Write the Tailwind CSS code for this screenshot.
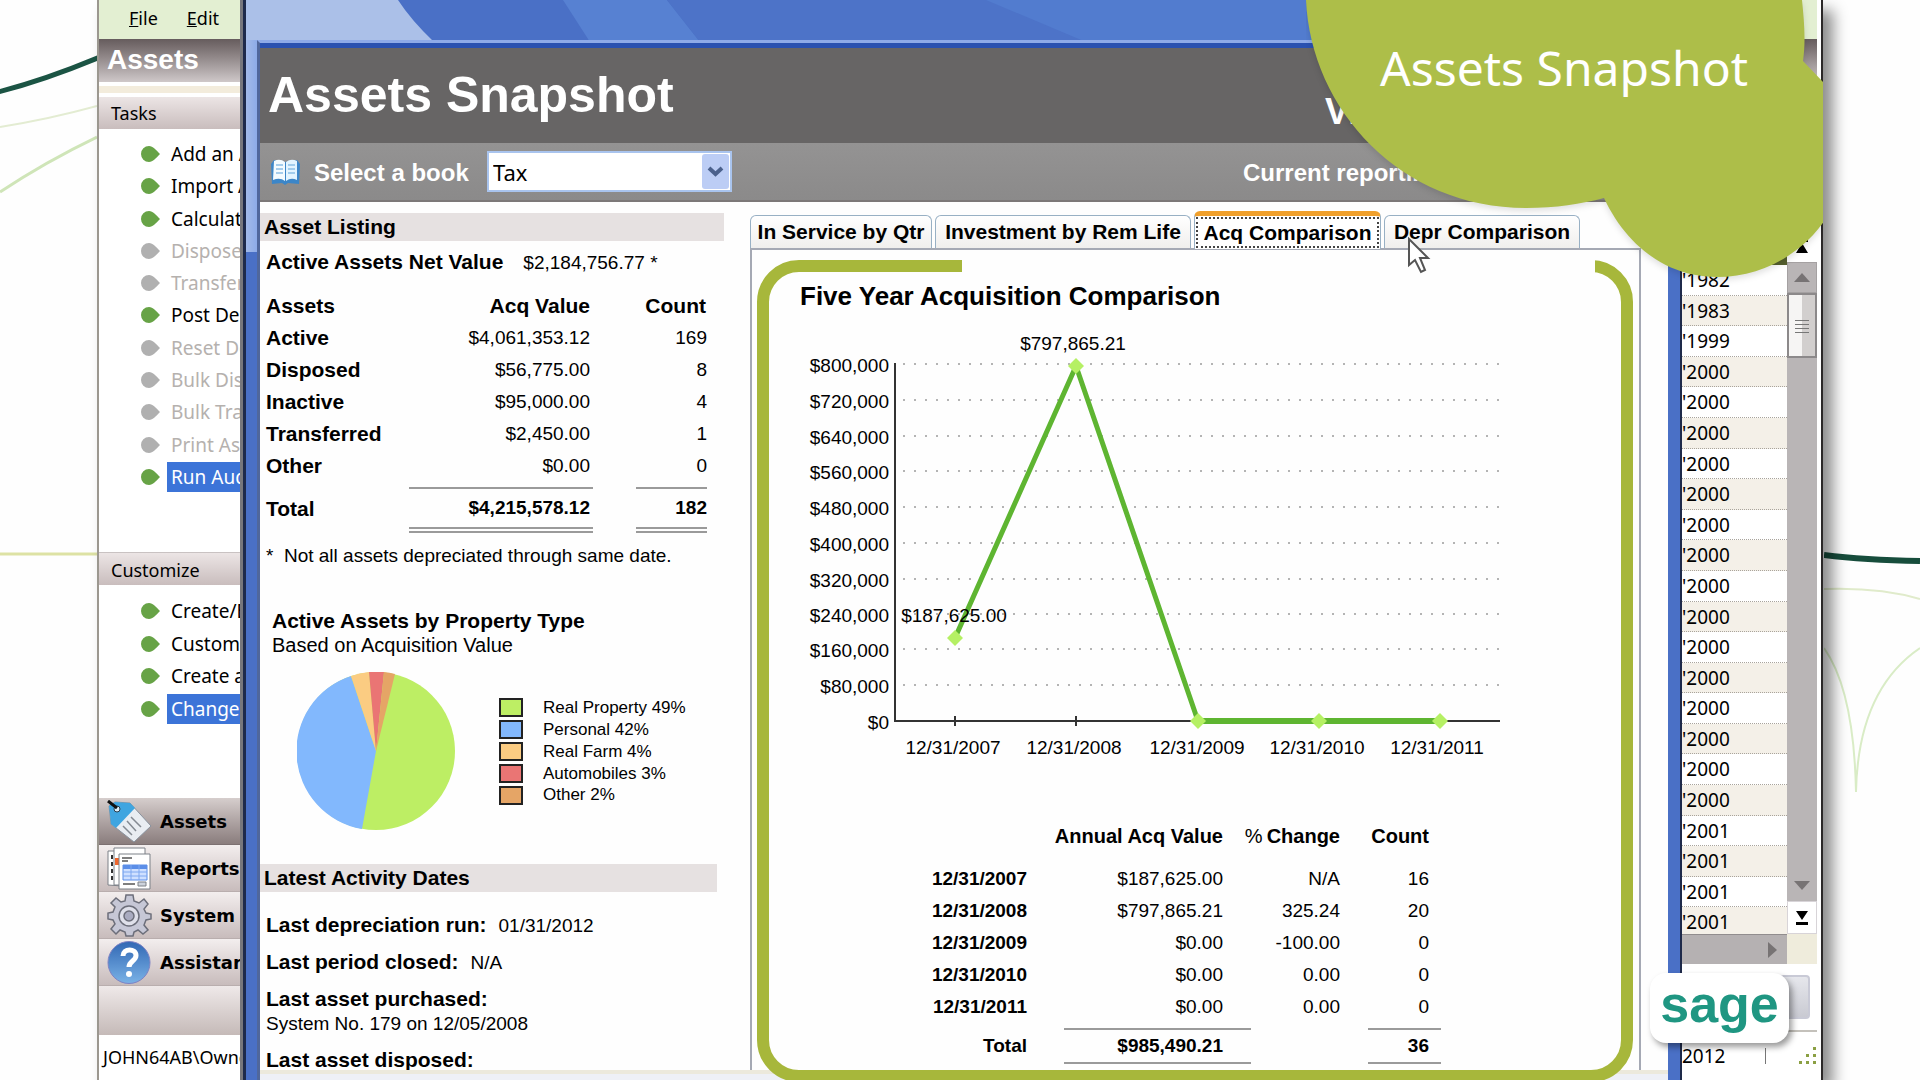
<!DOCTYPE html>
<html lang="en">
<head>
    <meta charset="UTF-8">
    <meta name="viewport" content="width=device-width, initial-scale=1.0">
    <title>Assets Snapshot</title>
    <script src="https://cdn.jsdelivr.net/npm/@tailwindcss/browser@4"></script>
</head>
<body class="relative h-screen overflow-hidden bg-[#fefefe] px-[97px] font-['Liberation_Sans',Arial,sans-serif] text-black">

    <!-- Background swooshes -->
    <svg class="absolute left-0 top-0" width="97" height="600" viewBox="0 0 97 600" fill="none">
        <path d="M-2 92 Q45 80 100 57" stroke="#1b5444" stroke-width="5"/>
        <path d="M0 127 Q50 119 97 106" stroke="#e3ecd2" stroke-width="2"/>
        <path d="M0 192 Q45 162 97 137" stroke="#cfe5b8" stroke-width="3"/>
        <path d="M0 554H97" stroke="#dde2a4" stroke-width="3"/>
    </svg>
    <svg class="absolute right-0 top-0" width="96" height="810" viewBox="0 0 96 810" fill="none">
        <path d="M0 555 Q40 560 96 561" stroke="#174d3c" stroke-width="6"/>
        <path d="M0 589 Q55 587 96 599" stroke="#e0ebcb" stroke-width="2"/>
        <path d="M0 648 Q30 690 32 792 Q34 690 96 648" stroke="#d9ecc6" stroke-width="2"/>
    </svg>

    <div class="relative flex h-full shadow-[10px_10px_14px_rgba(0,0,0,0.45)]">

        <!-- Task sidebar -->
        <aside class="flex w-[146px] shrink-0 flex-col overflow-hidden whitespace-nowrap border-r-3 border-l-2 border-r-[#77777c] border-l-[#9b978f] bg-white font-['Noto_Sans',sans-serif] text-[18px]">
            <nav class="flex h-[39px] shrink-0 items-center gap-[29px] bg-[#e3efd2] pb-[3px] pl-[30px]">
                <a href="#"><u>F</u>ile</a>
                <a href="#"><u>E</u>dit</a>
            </nav>
            <h2 class="h-[43px] shrink-0 bg-linear-to-b from-[#665c5d] to-[#cfc8c9] pl-2 font-['Liberation_Sans',sans-serif] text-[28px] leading-[42px] font-bold text-white">Assets</h2>
            <div class="h-[15px] shrink-0 border-y-4 border-white bg-[#f3ecdc]"></div>
            <h3 class="h-[32px] shrink-0 bg-linear-to-b from-[#ece5e5] to-[#c9bdbd] pl-3 leading-[32px]">Tasks</h3>
            <ul class="mt-[9px] grid h-[355px] shrink-0 auto-rows-fr items-center pl-[42px] text-[19px]">
                <li class="flex items-center gap-[7px]"><svg class="shrink-0 fill-[#67a346]" width="19" height="16" viewBox="0 0 19 16"><path d="M8 0C12 0 15 4 19 8C15 12 12 16 8 16A8 8 0 0 1 8 0Z"/></svg><a href="#" class="px-1 leading-[30px]">Add an Asset</a></li>
                <li class="flex items-center gap-[7px]"><svg class="shrink-0 fill-[#67a346]" width="19" height="16" viewBox="0 0 19 16"><path d="M8 0C12 0 15 4 19 8C15 12 12 16 8 16A8 8 0 0 1 8 0Z"/></svg><a href="#" class="px-1 leading-[30px]">Import Assets</a></li>
                <li class="flex items-center gap-[7px]"><svg class="shrink-0 fill-[#67a346]" width="19" height="16" viewBox="0 0 19 16"><path d="M8 0C12 0 15 4 19 8C15 12 12 16 8 16A8 8 0 0 1 8 0Z"/></svg><a href="#" class="px-1 leading-[30px]">Calculate</a></li>
                <li class="flex items-center gap-[7px] text-[#b5b1ae]"><svg class="shrink-0 fill-[#b0b0b0]" width="19" height="16" viewBox="0 0 19 16"><path d="M8 0C12 0 15 4 19 8C15 12 12 16 8 16A8 8 0 0 1 8 0Z"/></svg><a href="#" class="px-1 leading-[30px]">Dispose</a></li>
                <li class="flex items-center gap-[7px] text-[#b5b1ae]"><svg class="shrink-0 fill-[#b0b0b0]" width="19" height="16" viewBox="0 0 19 16"><path d="M8 0C12 0 15 4 19 8C15 12 12 16 8 16A8 8 0 0 1 8 0Z"/></svg><a href="#" class="px-1 leading-[30px]">Transfer</a></li>
                <li class="flex items-center gap-[7px]"><svg class="shrink-0 fill-[#67a346]" width="19" height="16" viewBox="0 0 19 16"><path d="M8 0C12 0 15 4 19 8C15 12 12 16 8 16A8 8 0 0 1 8 0Z"/></svg><a href="#" class="px-1 leading-[30px]">Post Depreciation</a></li>
                <li class="flex items-center gap-[7px] text-[#b5b1ae]"><svg class="shrink-0 fill-[#b0b0b0]" width="19" height="16" viewBox="0 0 19 16"><path d="M8 0C12 0 15 4 19 8C15 12 12 16 8 16A8 8 0 0 1 8 0Z"/></svg><a href="#" class="px-1 leading-[30px]">Reset Depreciation</a></li>
                <li class="flex items-center gap-[7px] text-[#b5b1ae]"><svg class="shrink-0 fill-[#b0b0b0]" width="19" height="16" viewBox="0 0 19 16"><path d="M8 0C12 0 15 4 19 8C15 12 12 16 8 16A8 8 0 0 1 8 0Z"/></svg><a href="#" class="px-1 leading-[30px]">Bulk Disposal</a></li>
                <li class="flex items-center gap-[7px] text-[#b5b1ae]"><svg class="shrink-0 fill-[#b0b0b0]" width="19" height="16" viewBox="0 0 19 16"><path d="M8 0C12 0 15 4 19 8C15 12 12 16 8 16A8 8 0 0 1 8 0Z"/></svg><a href="#" class="px-1 leading-[30px]">Bulk Transfer</a></li>
                <li class="flex items-center gap-[7px] text-[#b5b1ae]"><svg class="shrink-0 fill-[#b0b0b0]" width="19" height="16" viewBox="0 0 19 16"><path d="M8 0C12 0 15 4 19 8C15 12 12 16 8 16A8 8 0 0 1 8 0Z"/></svg><a href="#" class="px-1 leading-[30px]">Print Assets</a></li>
                <li class="flex items-center gap-[7px]"><svg class="shrink-0 fill-[#67a346]" width="19" height="16" viewBox="0 0 19 16"><path d="M8 0C12 0 15 4 19 8C15 12 12 16 8 16A8 8 0 0 1 8 0Z"/></svg><a href="#" class="bg-[#3c74d8] px-1 leading-[30px] text-white">Run Audit</a></li>
            </ul>
            <h3 class="mt-[59px] h-[33px] shrink-0 border-t border-[#c9c2c2] bg-linear-to-b from-[#ece5e5] to-[#c9bdbd] pl-3 leading-[34px]">Customize</h3>
            <ul class="mt-[10px] grid h-[130px] shrink-0 auto-rows-fr items-center pl-[42px] text-[19px]">
                <li class="flex items-center gap-[7px]"><svg class="shrink-0 fill-[#67a346]" width="19" height="16" viewBox="0 0 19 16"><path d="M8 0C12 0 15 4 19 8C15 12 12 16 8 16A8 8 0 0 1 8 0Z"/></svg><a href="#" class="px-1 leading-[30px]">Create/Edit Group</a></li>
                <li class="flex items-center gap-[7px]"><svg class="shrink-0 fill-[#67a346]" width="19" height="16" viewBox="0 0 19 16"><path d="M8 0C12 0 15 4 19 8C15 12 12 16 8 16A8 8 0 0 1 8 0Z"/></svg><a href="#" class="px-1 leading-[30px]">Customize View</a></li>
                <li class="flex items-center gap-[7px]"><svg class="shrink-0 fill-[#67a346]" width="19" height="16" viewBox="0 0 19 16"><path d="M8 0C12 0 15 4 19 8C15 12 12 16 8 16A8 8 0 0 1 8 0Z"/></svg><a href="#" class="px-1 leading-[30px]">Create a Report</a></li>
                <li class="flex items-center gap-[7px]"><svg class="shrink-0 fill-[#67a346]" width="19" height="16" viewBox="0 0 19 16"><path d="M8 0C12 0 15 4 19 8C15 12 12 16 8 16A8 8 0 0 1 8 0Z"/></svg><a href="#" class="bg-[#3c74d8] px-1 leading-[30px] text-white">Change View</a></li>
            </ul>
            <div class="mt-auto grid shrink-0 auto-rows-[47px] font-['DejaVu_Sans',Verdana,sans-serif] font-bold">
                <button class="flex items-center gap-2 border-b border-[#7c7071] bg-linear-to-b from-[#d6cecd] to-[#8a7d7d] pl-2">
                    <svg class="shrink-0" width="45" height="43" viewBox="0 0 45 43">
                        <path d="M2 6L4 24L27 42L44 26L23 3L8 2Z" fill="#e9edf2" stroke="#8a939e"/>
                        <path d="M2 6L4 24L9 28L28 8L23 3L8 2Z" fill="#3fa5e0"/>
                        <path d="M16 26L25 35M20 21L29 31M24 17L34 27" stroke="#848a92" stroke-width="1.5"/>
                        <circle cx="10" cy="9" r="3" fill="#dff0fa" stroke="#2b3e4c"/>
                        <path d="M1 1L10 8" stroke="#111" stroke-width="3"/>
                    </svg>
                    <span>Assets</span>
                </button>
                <button class="flex items-center gap-2 border-b border-[#b9aeae] bg-linear-to-b from-[#f3eeee] to-[#c8bcbc] pl-2">
                    <svg class="shrink-0" width="45" height="43" viewBox="0 0 45 43" fill="#fff" stroke="#7d8188">
                        <path d="M1 4H30V40L1 38Z"/>
                        <path d="M7 1H38V38H7Z"/>
                        <path d="M5 8V36" stroke="#333" stroke-dasharray="4 3" stroke-width="2"/>
                        <path d="M10 11V18" stroke="#f0672e" stroke-width="4"/>
                        <path d="M12 7H43V42H12Z"/>
                        <path d="M15 11H25M15 14H21M16 37H28" stroke="#555" stroke-width="1.5"/>
                        <path d="M16 18H40V33H16Z" fill="#cfe0ff" stroke="#5b8ee8"/>
                        <path d="M16 20H40" stroke="#5b8ee8" stroke-width="4"/>
                        <path d="M16 25H40M16 29H40M24 18V33M32 18V33" stroke="#7ea8f0"/>
                        <path d="M31 35H39V39H31Z" fill="#cdd3dc"/>
                    </svg>
                    <span>Reports</span>
                </button>
                <button class="flex items-center gap-2 border-b border-[#b9aeae] bg-linear-to-b from-[#f3eeee] to-[#c8bcbc] pl-2">
                    <svg class="shrink-0" width="45" height="43" viewBox="0 0 45 43" fill="#c6c7d6" stroke="#6c6e7a" stroke-width="1.5">
                        <path d="M19 1H26L27 7L32 9L37 5L41 10L37 15L39 19L44 20V25L39 26L37 31L41 36L36 40L31 36L27 38L26 42H19L18 38L13 36L9 40L4 35L8 30L6 26L1 25V19L6 18L8 13L4 9L9 4L14 8L18 7Z"/>
                        <circle cx="22" cy="22" r="10" fill="#dfe0ea"/>
                        <circle cx="22" cy="22" r="5" fill="#a9abc0"/>
                    </svg>
                    <span>System</span>
                </button>
                <button class="flex items-center gap-2 border-b border-[#b9aeae] bg-linear-to-b from-[#f3eeee] to-[#c8bcbc] pl-2">
                    <svg class="shrink-0" width="45" height="43" viewBox="0 0 45 43">
                        <defs><linearGradient id="help" x2="0" y2="1"><stop stop-color="#3167b4"/><stop offset="1" stop-color="#7ab2e6"/></linearGradient></defs>
                        <circle cx="22" cy="21.5" r="21" fill="url(#help)" stroke="#7d82c4"/>
                        <path d="M16 15C16 7 29 7 29 14.500C29 20 22 20 22 26" fill="none" stroke="#fff" stroke-width="5"/>
                        <circle cx="22" cy="33" r="3" fill="#fff"/>
                    </svg>
                    <span>Assistance</span>
                </button>
            </div>
            <div class="h-[49px] shrink-0 bg-linear-to-b from-[#efe9e9] to-[#c5bab8]"></div>
            <div class="h-[45px] shrink-0 bg-white pl-1 leading-[45px]">JOHN64AB\Owner</div>
        </aside>

        <!-- Snapshot window -->
        <main class="relative flex min-w-0 flex-1 flex-col border-l-3 border-r-2 border-[#1e2a4a] bg-[#4a70c6]">
            <svg class="absolute left-0 top-0" width="1080" height="42" viewBox="0 0 1080 42">
                <path d="M0 0H152Q165 20 188 42H0Z" fill="#abc0e8"/>
                <path d="M317 0H421L454 42H344Z" fill="#5781d2"/>
                <path d="M421 0H1080V42H454Z" fill="#4d73c8"/>
                <path d="M740 0H1080V42H840Z" fill="#527ccf"/>
            </svg>
            <div class="absolute left-0 top-10 h-[212px] w-[11px] bg-linear-to-r from-[#a3bae8] to-[#8dabe8]"></div>
            <div class="relative ml-[11px] mr-[12px] mt-[40px] flex min-h-0 flex-1 flex-col border-l-3 border-t-3 border-t-[#8eaae8] border-l-[#50679c] bg-[#fefefe]">
                <div class="h-[5px] shrink-0 bg-[#2a51b0]"></div>
                <header class="flex h-[95px] shrink-0 items-center bg-[#676565] text-white">
                    <h1 class="w-[1065px] pl-2 font-['Impact','Liberation_Sans',sans-serif] text-[50px] font-bold">Assets Snapshot</h1>
                    <p class="pt-8 text-[36px] font-bold">View</p>
                </header>
                <div class="flex h-[59px] shrink-0 items-center border-b-2 border-[#7c7878] bg-linear-to-b from-[#949393] to-[#8b8a8a] text-[24px] font-bold text-white">
                    <svg class="ml-[11px] shrink-0" width="29" height="26" viewBox="0 0 29 26">
                        <path d="M0 5L3 1L14 3L26 1L29 5L28 25L17 24L14 26L11 24L1 25Z" fill="#3c86c8"/>
                        <path d="M3 2Q9 -1 14 3V22Q9 18 2 21Z" fill="#f3fbff"/>
                        <path d="M26 2Q20 -1 15 3V22Q20 18 26 21Z" fill="#e2f4ff"/>
                        <path d="M5 6H12M5 10H12M5 14H12M17 6H24M17 10H24M17 14H24" stroke="#8cbfe6" stroke-width="1.500"/>
                    </svg>
                    <label for="book" class="ml-[14px] w-[173px] pt-[2px]">Select a book</label>
                    <div class="relative">
                        <select id="book" class="h-[41px] w-[245px] appearance-none border-2 border-[#a9c4ee] bg-white pt-[2px] pl-1 font-['Noto_Sans',sans-serif] text-[22px] font-normal text-black">
                            <option>Tax</option>
                        </select>
                        <svg class="pointer-events-none absolute right-[3px] top-[3px]" width="27" height="35" viewBox="0 0 27 35">
                            <rect width="27" height="35" rx="3" fill="#bccdf5"/>
                            <path d="M7 14L13.500 20L20 14" fill="none" stroke="#4b618c" stroke-width="4"/>
                        </svg>
                    </div>
                    <p class="ml-[511px] pt-[2px] whitespace-nowrap">Current reporting</p>
                </div>

                <div class="flex min-h-0 flex-1">
                    <!-- Left column -->
                    <section class="w-[490px] shrink-0 overflow-hidden pt-[11px] text-[19px]">
                        <h2 class="h-[28px] w-[464px] bg-[#e6e1e1] pl-1 text-[21px] leading-[28px] font-bold">Asset Listing</h2>
                        <p class="mt-[5px] pl-[6px] leading-[32px]"><b class="mr-[20px] text-[21px]">Active Assets Net Value</b>$2,184,756.77 *</p>
                        <table class="ml-[6px] mt-[11px] w-[441px] table-fixed text-right leading-[32px]">
                            <colgroup><col class="w-[143px]"><col class="w-[184px]"><col class="w-[43px]"><col></colgroup>
                            <thead class="text-[21px]">
                                <tr><th class="text-left">Assets</th><th class="pr-[3px]">Acq Value</th><th></th><th class="pr-px">Count</th></tr>
                            </thead>
                            <tbody>
                                <tr><th class="text-left text-[21px]">Active</th><td class="pr-[3px]">$4,061,353.12</td><td></td><td>169</td></tr>
                                <tr><th class="text-left text-[21px]">Disposed</th><td class="pr-[3px]">$56,775.00</td><td></td><td>8</td></tr>
                                <tr><th class="text-left text-[21px]">Inactive</th><td class="pr-[3px]">$95,000.00</td><td></td><td>4</td></tr>
                                <tr><th class="text-left text-[21px]">Transferred</th><td class="pr-[3px]">$2,450.00</td><td></td><td>1</td></tr>
                                <tr class="h-[38px] align-top"><th class="text-left text-[21px]">Other</th><td class="pr-[3px]">$0.00</td><td></td><td>0</td></tr>
                            </tbody>
                            <tfoot class="font-bold">
                                <tr class="h-[42px]"><th class="text-left text-[21px]">Total</th><td class="border-t-2 border-b-6 border-[#9a9a9a] pr-[3px] [border-bottom-style:double]">$4,215,578.12</td><td></td><td class="border-t-2 border-b-6 border-[#9a9a9a] [border-bottom-style:double]">182</td></tr>
                            </tfoot>
                        </table>
                        <p class="ml-[6px] mt-[7px] leading-[32px]">*&nbsp; Not all assets depreciated through same date.</p>

                        <h2 class="ml-3 mt-[37px] text-[21px] leading-[24px] font-bold">Active Assets by Property Type</h2>
                        <p class="ml-3 text-[20px] leading-[24px]">Based on Acquisition Value</p>
                        <div class="ml-[37px] mt-[15px] flex">
                            <svg width="158" height="158" viewBox="-79 -79 158 158">
                                <circle r="79" fill="#bdee64"/>
                                <path d="M0 0L-14 78A79 79 0 0 1 -25 -75Z" fill="#82b8fd"/>
                                <path d="M0 0L-25 -75A79 79 0 0 1 -7 -79Z" fill="#fbcc82"/>
                                <path d="M0 0L-7 -79A79 79 0 0 1 8 -79Z" fill="#ea7574"/>
                                <path d="M0 0L8 -79A79 79 0 0 1 19 -77Z" fill="#e5a566"/>
                            </svg>
                            <ul class="ml-[44px] mt-[25px] grid h-[109px] auto-rows-fr text-[17px]">
                                <li class="flex items-center gap-5"><span class="h-[19px] w-[24px] border-2 border-[#222] bg-[#bdee64]"></span>Real Property 49%</li>
                                <li class="flex items-center gap-5"><span class="h-[19px] w-[24px] border-2 border-[#222] bg-[#82b8fd]"></span>Personal 42%</li>
                                <li class="flex items-center gap-5"><span class="h-[19px] w-[24px] border-2 border-[#222] bg-[#fbcc82]"></span>Real Farm 4%</li>
                                <li class="flex items-center gap-5"><span class="h-[19px] w-[24px] border-2 border-[#222] bg-[#ea7574]"></span>Automobiles 3%</li>
                                <li class="flex items-center gap-5"><span class="h-[19px] w-[24px] border-2 border-[#222] bg-[#e5a566]"></span>Other 2%</li>
                            </ul>
                        </div>

                        <h2 class="mt-[34px] h-[28px] w-[457px] bg-[#e6e1e1] pl-1 text-[21px] leading-[28px] font-bold">Latest Activity Dates</h2>
                        <div class="ml-[6px] mt-[21px] leading-[24px]">
                            <p><b class="mr-3 text-[21px]">Last depreciation run:</b>01/31/2012</p>
                            <p class="mt-3"><b class="mr-3 text-[21px]">Last period closed:</b>N/A</p>
                            <p class="mt-3"><b class="text-[21px]">Last asset purchased:</b><br>System No. 179 on 12/05/2008</p>
                            <p class="mt-3"><b class="text-[21px]">Last asset disposed:</b></p>
                        </div>
                    </section>

                    <!-- Tabs and comparison panel -->
                    <section class="mr-[27px] flex min-w-0 flex-1 flex-col pt-[10px]">
                        <div role="tablist" class="flex h-[36px] shrink-0 items-end gap-[3px] text-[21px] font-bold whitespace-nowrap">
                            <button role="tab" class="h-[33px] w-[182px] rounded-t-md border border-b-0 border-[#98b0c4] bg-linear-to-b from-white to-[#f0efed]">In Service by Qtr</button>
                            <button role="tab" class="h-[33px] w-[256px] rounded-t-md border border-b-0 border-[#98b0c4] bg-linear-to-b from-white to-[#f0efed]">Investment by Rem Life</button>
                            <button role="tab" aria-selected="true" class="relative z-10 -mb-px h-[38px] w-[187px] rounded-t-md border-t-5 border-r border-l border-r-[#98b0c4] border-l-[#98b0c4] border-t-[#f0a02c] bg-white p-px"><span class="flex h-full items-center justify-center border-2 border-dotted border-[#444]">Acq Comparison</span></button>
                            <button role="tab" class="h-[33px] w-[196px] rounded-t-md border border-b-0 border-[#98b0c4] bg-linear-to-b from-white to-[#f0efed]">Depr Comparison</button>
                        </div>
                        <div role="tabpanel" class="relative min-h-0 flex-1 border-x-2 border-t-2 border-[#a5a9b4]">
                            <div class="absolute -bottom-3 left-[5px] right-[6px] top-[10px] rounded-[42px] border-12 border-[#a7b73b]"></div>
                            <div class="absolute left-[210px] right-[44px] top-[8px] h-[16px] bg-[#fefefe]"></div>
                            <div class="relative pl-[48px] pt-[30px]">
                                <h2 class="text-[26px] leading-[32px] font-bold">Five Year Acquisition Comparison</h2>
                                <svg class="text-[19px]" width="720" height="450" viewBox="0 0 720 450">
                                    <g stroke="#b4b4b4" stroke-width="2" stroke-dasharray="2 9">
                                        <path d="M103 52H700M103 88H700M103 124H700M103 159H700M103 195H700M103 231H700M103 267H700M103 302H700M103 337H700M103 373H700"/>
                                    </g>
                                    <path d="M95 51V409H700M155 404V414M276 404V414" fill="none" stroke="#333" stroke-width="2"/>
                                    <path d="M155 326L276 54L398 409" fill="none" stroke="#5eb531" stroke-width="5"/>
                                    <path d="M398 409H640" stroke="#5eb531" stroke-width="6"/>
                                    <path d="M155 318L163 326L155 334L147 326ZM276 46L284 54L276 62L268 54ZM398 401L406 409L398 417L390 409ZM519 401L527 409L519 417L511 409ZM640 401L648 409L640 417L632 409Z" fill="#b5f064"/>
                                    <g text-anchor="end">
                                        <text x="89" y="60">$800,000</text>
                                        <text x="89" y="96">$720,000</text>
                                        <text x="89" y="132">$640,000</text>
                                        <text x="89" y="167">$560,000</text>
                                        <text x="89" y="203">$480,000</text>
                                        <text x="89" y="239">$400,000</text>
                                        <text x="89" y="275">$320,000</text>
                                        <text x="89" y="310">$240,000</text>
                                        <text x="89" y="345">$160,000</text>
                                        <text x="89" y="381">$80,000</text>
                                        <text x="89" y="417">$0</text>
                                    </g>
                                    <g text-anchor="middle">
                                        <text x="273" y="38">$797,865.21</text>
                                        <text x="154" y="310">$187,625.00</text>
                                        <text x="153" y="442">12/31/2007</text>
                                        <text x="274" y="442">12/31/2008</text>
                                        <text x="397" y="442">12/31/2009</text>
                                        <text x="517" y="442">12/31/2010</text>
                                        <text x="637" y="442">12/31/2011</text>
                                    </g>
                                </svg>
                                <table class="ml-[112px] mt-[58px] w-[529px] table-fixed text-right text-[19px] leading-[32px]">
                                    <colgroup><col class="w-[152px]"><col class="w-[187px]"><col class="w-[117px]"><col></colgroup>
                                    <thead class="text-[20px]">
                                        <tr class="h-[43px] align-top whitespace-nowrap"><th></th><th class="pr-[28px]"><span class="flex justify-end">Annual Acq Value</span></th><th class="pr-[28px]"><span class="flex justify-end gap-1"><span class="font-normal">%</span>Change</span></th><th class="pr-[12px]">Count</th></tr>
                                    </thead>
                                    <tbody>
                                        <tr><th class="pr-[37px]">12/31/2007</th><td class="pr-[28px]">$187,625.00</td><td class="pr-[28px]">N/A</td><td class="pr-[12px]">16</td></tr>
                                        <tr><th class="pr-[37px]">12/31/2008</th><td class="pr-[28px]">$797,865.21</td><td class="pr-[28px]">325.24</td><td class="pr-[12px]">20</td></tr>
                                        <tr><th class="pr-[37px]">12/31/2009</th><td class="pr-[28px]">$0.00</td><td class="pr-[28px]">-100.00</td><td class="pr-[12px]">0</td></tr>
                                        <tr><th class="pr-[37px]">12/31/2010</th><td class="pr-[28px]">$0.00</td><td class="pr-[28px]">0.00</td><td class="pr-[12px]">0</td></tr>
                                        <tr class="h-[38px] align-top"><th class="pr-[37px]">12/31/2011</th><td class="pr-[28px]">$0.00</td><td class="pr-[28px]">0.00</td><td class="pr-[12px]">0</td></tr>
                                    </tbody>
                                    <tfoot class="font-bold">
                                        <tr><th class="pr-[37px]">Total</th><td class="border-y-2 border-[#9a9a9a] pr-[28px]">$985,490.21</td><td></td><td class="border-y-2 border-[#9a9a9a] pr-[12px]">36</td></tr>
                                    </tfoot>
                                </table>
                            </div>
                        </div>
                    </section>
                </div>
                <div class="h-[10px] shrink-0 border-t-4 border-[#ece9dc] bg-[#eef0f6]"></div>
            </div>
        </main>

        <!-- Visible edge of the asset grid -->
        <aside class="flex w-[141px] shrink-0 flex-col border-r-2 border-[#2b2828] bg-white pr-1 font-['Noto_Sans',sans-serif] text-[19px]">
            <div class="h-[39px] shrink-0 bg-[#e3efd2]"></div>
            <div class="h-[43px] shrink-0 bg-linear-to-b from-[#665c5d] to-[#cfc8c9]"></div>
            <div class="mt-[148px] flex h-[704px] shrink-0">
                <div class="flex min-w-0 flex-1 flex-col overflow-hidden">
                    <div class="h-[35px] shrink-0 bg-[#56602f]"></div>
                    <ul class="grid h-[673px] shrink-0 auto-rows-fr leading-[30px] *:border-b *:border-dotted *:border-[#a9a49c] *:even:bg-[#f4f0e8]">
                        <li>'1982</li>
                        <li>'1983</li>
                        <li>'1999</li>
                        <li>'2000</li>
                        <li>'2000</li>
                        <li>'2000</li>
                        <li>'2000</li>
                        <li>'2000</li>
                        <li>'2000</li>
                        <li>'2000</li>
                        <li>'2000</li>
                        <li>'2000</li>
                        <li>'2000</li>
                        <li>'2000</li>
                        <li>'2000</li>
                        <li>'2000</li>
                        <li>'2000</li>
                        <li>'2000</li>
                        <li>'2001</li>
                        <li>'2001</li>
                        <li>'2001</li>
                        <li>'2001</li>
                    </ul>
                </div>
                <div class="flex w-[30px] flex-col bg-[#b9b5b6]">
                    <button aria-label="First row" class="flex h-[32px] items-end justify-center bg-white pb-2"><svg width="14" height="15" viewBox="0 0 14 15"><path d="M1 0H13V3H1ZM7 4L13 14H1Z"/></svg></button>
                    <button aria-label="Up" class="flex h-[31px] items-center justify-center border border-[#a5a1a2]"><svg width="16" height="9" viewBox="0 0 16 9" fill="#777374"><path d="M8 0L16 9H0Z"/></svg></button>
                    <div class="flex h-[65px] items-center justify-center border-2 border-[#8c898a] bg-linear-to-r from-[#f6f5f4] from-50% to-[#d2cfce] to-50%"><svg width="14" height="14" viewBox="0 0 14 14" stroke="#777"><path d="M0 1.500H14M0 5.500H14M0 9.500H14M0 13.500H14"/></svg></div>
                    <button aria-label="Down" class="mt-auto flex h-[32px] items-center justify-center"><svg width="16" height="9" viewBox="0 0 16 9" fill="#777374"><path d="M8 9L16 0H0Z"/></svg></button>
                    <button aria-label="Last row" class="flex h-[33px] items-center justify-center border border-[#d8d4d8] bg-white"><svg width="14" height="15" viewBox="0 0 14 15"><path d="M1 12H13V15H1ZM7 10L13 1H1Z"/></svg></button>
                </div>
            </div>
            <div class="flex h-[30px] shrink-0">
                <button aria-label="Right" class="flex flex-1 items-center justify-end border-t border-[#918d8e] bg-[#b5b1b2] pr-[10px]"><svg width="9" height="16" viewBox="0 0 9 16" fill="#777374"><path d="M0 0L9 8L0 16Z"/></svg></button>
                <div class="w-[30px] bg-[#efecdc]"></div>
            </div>
            <div class="flex flex-1 items-center justify-end border-b-2 border-[#c4c1bb] pr-[7px]">
                <button aria-label="Close" class="h-[44px] w-[80px] rounded-sm border-2 border-[#c9cad6] bg-linear-to-b from-[#e6e7ec] to-[#c9cad2]"></button>
            </div>
            <div class="flex h-[48px] shrink-0 items-center justify-between">
                <span>2012</span>
                <span class="ml-2 h-4 w-px bg-[#777]"></span>
                <svg width="19" height="18" viewBox="0 0 19 18" fill="#8ba043"><path d="M15 0H18V3H15ZM8 7H11V10H8ZM15 7H18V10H15ZM1 14H4V17H1ZM8 14H11V17H8ZM15 14H18V17H15Z"/></svg>
            </div>
        </aside>

        <!-- Caption bubble -->
        <div class="absolute right-0 top-0 h-[290px] w-[517px] overflow-hidden">
            <svg class="drop-shadow-md" width="517" height="290" viewBox="0 0 517 290" fill="#adbe49">
                <path d="M0 -10V0C5 110 95 208 220 208C250 208 275 204 298 198C320 245 360 277 411 277C455 277 495 255 519 220V84L497 61C500 40 498 20 496 0V-10Z"/>
            </svg>
            <p class="absolute left-[74px] top-[36px] font-['Noto_Sans',sans-serif] text-[48px] leading-[64px] whitespace-nowrap text-white">Assets Snapshot</p>
        </div>

        <!-- Logo badge -->
        <div class="absolute bottom-[37px] right-[34px] flex h-[70px] w-[139px] items-center justify-center rounded-2xl bg-white pb-2 text-[52px] leading-none font-bold text-[#1f9682] shadow-[3px_4px_6px_rgba(0,0,0,0.4)]">sage</div>

        <!-- Mouse pointer -->
        <svg class="absolute left-[1310px] top-[237px]" width="24" height="38" viewBox="0 0 24 38">
            <path d="M2 2V28L8 23L14 35L18 33L13 21H21Z" fill="#fff" stroke="#555" stroke-width="2"/>
        </svg>
    </div>
</body>
</html>
